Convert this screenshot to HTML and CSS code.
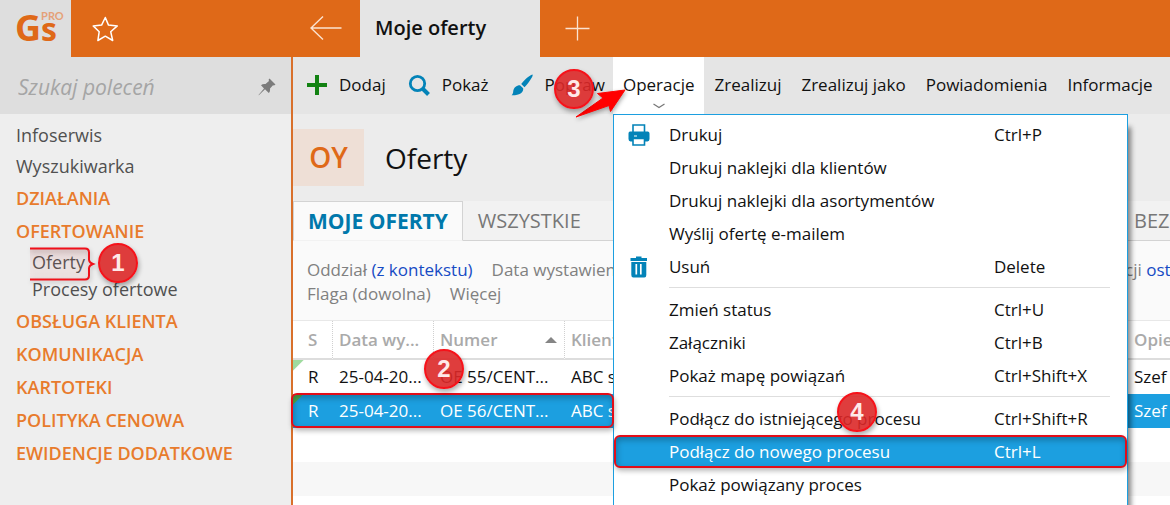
FILE: index.html
```html
<!DOCTYPE html>
<html lang="pl">
<head>
<meta charset="utf-8">
<title>Moje oferty</title>
<link rel="stylesheet" href="styles.css">
</head>
<body>
<div class="app">
  <header class="topbar">
    <div class="brand"><span class="brand-g">G</span><span class="brand-rest"><span class="brand-pro">PRO</span><span class="brand-s">s</span></span></div>
    <div class="topbar-left">
      <button class="icon-btn" aria-label="Ulubione"><svg width="28" height="28" viewBox="0 0 28 28" fill="none" stroke="#fff" stroke-width="1.5" stroke-linejoin="round"><path d="M14.300 2.500l3.200 7.600 8.800.8-6.600 5.800 2 8.800-7.400-4.300-7.400 4.300 1.300-8.800-6-5.800 8.400-.8z"/></svg></button>
    </div>
    <button class="icon-btn back" aria-label="Wstecz"><svg width="32" height="26" viewBox="0 0 32 26" fill="none" stroke="#fbe3d1" stroke-width="1.400"><path d="M31.500 12H1M13 .5L1 12l12 11.500"/></svg></button>
    <div class="doc-tab">Moje oferty</div>
    <button class="icon-btn add" aria-label="Nowa karta"><svg width="26" height="26" viewBox="0 0 26 26" fill="none" stroke="#fbe3d1" stroke-width="1.300"><path d="M.5 12.500h24M12.500.5v24"/></svg></button>
  </header>

  <aside class="sidebar">
    <div class="search">
      <input class="search-input" type="text" placeholder="Szukaj poleceń" aria-label="Szukaj poleceń">
      <button class="icon-btn" aria-label="Przypnij"><svg width="18" height="18" viewBox="0 0 18 18" fill="#7b7b7b"><path d="M11.500.5l6 6-1.500 1-1-.3-3 3.300c.3 2-.2 3.500-1.200 4.500L7 11.300.8 17.300l-.3-.3L6 10.500 3 7.200c1.200-1 2.700-1.400 4.500-1.100L11 3l-.4-1.200z"/></svg></button>
    </div>
    <nav class="nav">
      <a class="nav-item" href="#">Infoserwis</a>
      <a class="nav-item" href="#">Wyszukiwarka</a>
      <a class="nav-group" href="#">DZIAŁANIA</a>
      <a class="nav-group" href="#">OFERTOWANIE</a>
      <div class="nav-sub">
        <a class="nav-sub-item marked" href="#">Oferty
          <svg class="bracket" width="66" height="34" viewBox="0 0 66 34"><defs><linearGradient id="bf" x1="0" y1="0" x2="0" y2="1"><stop offset="0" stop-color="#900" stop-opacity=".12"/><stop offset=".5" stop-color="#f88" stop-opacity=".08"/><stop offset="1" stop-color="#f88" stop-opacity=".1"/></linearGradient></defs><path d="M0 1.500h55q4 0 4 4v7q0 3 4 4.500-4 1.500-4 4.500v7q0 4-4 4H0" fill="url(#bf)"/><path d="M0 1.500h55q4 0 4 4v7q0 3 4 4.500-4 1.500-4 4.500v7q0 4-4 4H0" fill="none" stroke="#f0101a" stroke-width="2"/></svg>
          <span class="badge badge-1">1</span></a>
        <a class="nav-sub-item" href="#">Procesy ofertowe</a>
      </div>
      <a class="nav-group" href="#">OBSŁUGA KLIENTA</a>
      <a class="nav-group" href="#">KOMUNIKACJA</a>
      <a class="nav-group" href="#">KARTOTEKI</a>
      <a class="nav-group" href="#">POLITYKA CENOWA</a>
      <a class="nav-group" href="#">EWIDENCJE DODATKOWE</a>
    </nav>
  </aside>

  <main class="main">
    <div class="toolbar">
      <button class="tool tool-icon"><svg width="20" height="20" viewBox="0 0 20 20"><path d="M8 0h4v8h8v4h-8v8H8v-8H0V8h8z" fill="#128212"/></svg>Dodaj</button>
      <button class="tool tool-icon"><svg width="22" height="22" viewBox="0 0 22 22" fill="none" stroke="#0383b8"><circle cx="9.500" cy="9.500" r="7.200" stroke-width="2.800"/><path d="M15 15l5.500 5.500" stroke-width="4"/></svg>Pokaż</button>
      <button class="tool tool-icon"><svg width="22" height="22" viewBox="0 0 22 22" fill="#0383b8"><path d="M21.500.5c.5.400 0 2-1 3.500-2 3.500-4.500 7-7 9.300l-3.300-3.200C12.800 6.500 18 1.500 21.500.5zM9 11.200l3.200 3.100c.5 5-4.500 7.300-11.700 7 .8-.6 1.700-2 1.700-3.800.3-4 3.300-6.300 6.800-6.300z"/></svg>Popraw</button>
      <div class="tool-open">
        <button class="tool tool-active" aria-expanded="true">Operacje<svg class="chevron" width="12" height="6" viewBox="0 0 12 6" fill="none" stroke="#777" stroke-width="1.200"><path d="M.5 1L6 4.500 11.500 1"/></svg></button>
        <svg class="arrow" width="52" height="34" viewBox="0 0 52 34"><path d="M1 29L28 10 22.500 5.500 50 2 35.500 23.500 34 17.500 1 29z" fill="#f00" stroke="#f00" stroke-linejoin="round"/></svg>
        <span class="badge badge-3">3</span>
        <div class="menu" role="menu">
          <button class="menu-item" role="menuitem"><svg width="22" height="22" viewBox="0 0 22 22"><path d="M5 8V1h11.500v7" fill="#fff" stroke="#0383b8" stroke-width="1.600"/><path d="M2 7.500h18a2 2 0 0 1 1.500 2V15q0 2-2 2.500H2.500Q.5 17 .5 15V9.500q0-2 1.500-2z" fill="#0383b8"/><path d="M5 14.500h11.500V21H5z" fill="#fff" stroke="#0383b8" stroke-width="1.600"/><path d="M6 11.500h3v1H6z" fill="#fff"/></svg><span>Drukuj</span><kbd>Ctrl+P</kbd></button>
          <button class="menu-item" role="menuitem"><span>Drukuj naklejki dla klientów</span></button>
          <button class="menu-item" role="menuitem"><span>Drukuj naklejki dla asortymentów</span></button>
          <button class="menu-item" role="menuitem"><span>Wyślij ofertę e-mailem</span></button>
          <button class="menu-item" role="menuitem"><svg width="22" height="22" viewBox="0 0 22 22"><path d="M2.500 2H8V.5h5.500V2H19v3H2.500z" fill="#0383b8"/><path d="M3.300 6h15v13q0 2.500-2 2.500h-11q-2 0-2-2.500z" fill="#0383b8"/><path d="M8.300 8v10.500M12.800 8v10.500" stroke="#fff" stroke-width="1.700"/></svg><span>Usuń</span><kbd>Delete</kbd></button>
          <hr class="menu-sep">
          <button class="menu-item" role="menuitem"><span>Zmień status</span><kbd>Ctrl+U</kbd></button>
          <button class="menu-item" role="menuitem"><span>Załączniki</span><kbd>Ctrl+B</kbd></button>
          <button class="menu-item" role="menuitem"><span>Pokaż mapę powiązań</span><kbd>Ctrl+Shift+X</kbd></button>
          <hr class="menu-sep">
          <button class="menu-item" role="menuitem"><span>Podłącz do istniejącego procesu</span><kbd>Ctrl+Shift+R</kbd></button>
          <button class="menu-item selected" role="menuitem"><span>Podłącz do nowego procesu</span><kbd>Ctrl+L</kbd><span class="badge badge-4">4</span></button>
          <button class="menu-item" role="menuitem"><span>Pokaż powiązany proces</span></button>
        </div>
      </div>
      <button class="tool">Zrealizuj</button>
      <button class="tool">Zrealizuj jako</button>
      <button class="tool">Powiadomienia</button>
      <button class="tool">Informacje</button>
    </div>

    <div class="heading">
      <div class="heading-code">OY</div>
      <h1 class="heading-title">Oferty</h1>
    </div>

    <div class="tabs" role="tablist">
      <button class="tab tab-current" role="tab" aria-selected="true">MOJE OFERTY</button>
      <button class="tab" role="tab">WSZYSTKIE</button>
      <button class="tab tab-last" role="tab">BEZ</button>
    </div>

    <div class="filters">
      <div class="filter-row">
        <span>Oddział <a class="filter-link" href="#">(z kontekstu)</a></span>
        <span>Data wystawienia</span>
        <span class="filter-last">cji <a class="filter-link" href="#">ost</a></span>
      </div>
      <div class="filter-row">
        <span>Flaga (dowolna)</span>
        <span>Więcej</span>
      </div>
    </div>

    <div class="grid-wrap">
      <table class="grid">
        <colgroup><col class="c-s"><col class="c-date"><col class="c-num"><col><col class="c-owner"></colgroup>
        <thead><tr><th>S</th><th>Data wy...</th><th class="sorted"><span class="sort-cell">Numer<svg width="12" height="6" viewBox="0 0 12 6"><path d="M0 6l6-6 6 6z" fill="#858585"/></svg></span></th><th>Klient</th><th>Opie</th></tr></thead>
        <tbody>
          <tr><td class="flagged">R</td><td>25-04-20...</td><td>OE 55/CENT...</td><td>ABC s</td><td>Szef</td></tr>
          <tr class="row-selected"><td class="flagged">R<span class="row-frame"></span><span class="badge badge-2">2</span></td><td>25-04-20...</td><td>OE 56/CENT...</td><td>ABC s</td><td>Szef</td></tr>
          <tr><td></td><td></td><td></td><td></td><td></td></tr>
          <tr class="row-alt"><td></td><td></td><td></td><td></td><td></td></tr>
        </tbody>
      </table>
    </div>
  </main>
</div>
</body>
</html>
```
FILE: styles.css
```css
* { box-sizing: border-box; }

body {
  margin: 0;
  overflow: hidden;
  font: 17px/24px "Open Sans", "Noto Sans", sans-serif;
  color: #111;
}

button {
  padding: 0;
  border: 0;
  background: none;
  color: inherit;
  font: inherit;
  text-align: left;
  white-space: nowrap;
}

a { text-decoration: none; }

svg { flex: none; display: block; }

.app {
  display: grid;
  grid-template-columns: 293px minmax(0, 1fr);
  grid-template-rows: 57px minmax(0, 1fr);
  height: 100vh;
}

/* top bar */
.topbar {
  grid-column: 1 / -1;
  display: flex;
  background: #df6918;
}

.brand {
  display: flex;
  align-items: flex-start;
  width: 71px;
  padding: 10px 0 0 15px;
  background: #dedede;
  color: #df6918;
  font-family: "Liberation Sans Narrow", "Open Sans", sans-serif;
}
.brand-g { font-size: 36px; line-height: 36px; font-weight: 700; }
.brand-rest { display: flex; flex-direction: column; padding-top: 1px; }
.brand-pro { font: 700 11px/10px Lato, sans-serif; color: #e5a178; }
.brand-s { font-size: 32px; line-height: 16px; font-weight: 700; }

.icon-btn { display: flex; align-items: center; }
.topbar-left { display: flex; width: 222px; padding-left: 20px; }
.back { width: 67px; padding-left: 17px; }
.doc-tab {
  width: 180px;
  padding: 0 15px;
  background: #e5e5e5;
  font-size: 20px;
  font-weight: 600;
  line-height: 56px;
  white-space: nowrap;
}
.add { padding-left: 25px; }

/* sidebar */
.sidebar { background: #eee; border-right: 2px solid #d9702b; }
.search {
  display: flex;
  align-items: center;
  justify-content: space-between;
  height: 57px;
  padding: 2px 15px 0 18px;
  background: #dedede;
}
.search-input {
  flex: 1;
  min-width: 0;
  padding: 0;
  border: 0;
  background: none;
  font: italic 21px/28px "Open Sans", sans-serif;
}
.search-input::placeholder { color: #a5a5a5; opacity: 1; }

.nav { display: flex; flex-direction: column; padding: 6px 16px; }
.nav-item { color: #505050; line-height: 31px; font-size: 18px; }
.nav-group { color: #e87b2c; line-height: 33px; font-size: 18px; font-weight: 600; }
.nav-sub { display: flex; flex-direction: column; padding: 1px 0 2px 16px; }
.nav-sub-item { color: #505050; line-height: 27px; font-size: 18px; }
.marked { position: relative; align-self: flex-start; }
.bracket { position: absolute; left: -2px; top: -2px; filter: drop-shadow(1px 2px 2px #0003); }

/* numbered callouts */
.badge {
  position: absolute;
  z-index: 5;
  width: 40px;
  height: 40px;
  border: 2px solid #f6121a;
  border-radius: 50%;
  background: #dc2828e6;
  box-shadow: 1px 3px 5px #0005;
  color: #ffe9e9;
  font: 700 24px/36px "Liberation Sans", sans-serif;
  text-align: center;
}
.badge-1 { left: 66px; top: -6px; }
.badge-2 { left: 131px; top: -45px; }
.badge-3 { left: -59px; top: 12px; }
.badge-4 { left: 221px; top: -45px; }

/* toolbar */
.main { display: flex; flex-direction: column; min-width: 0; background: #ececec; }
.toolbar { display: flex; height: 57px; background: #e5e5e5; }
.tool { display: flex; align-items: center; padding: 0 10px 2px; }
.tool-icon { gap: 12px; padding: 0 8px 2px 14px; }
.tool-open { position: relative; display: flex; }
.tool-active { background: #fff; }
.chevron { position: absolute; left: 40px; bottom: 5px; }
.arrow { position: absolute; z-index: 4; left: -38px; top: 31px; filter: drop-shadow(1px 2px 2px #0005); }

.menu {
  position: absolute;
  z-index: 3;
  left: 0;
  top: 57px;
  width: 515px;
  padding: 3px 0 12px;
  border: 1px solid #1c9fe0;
  background: #fff;
  box-shadow: 5px 11px 5px -2px #0007;
}
.menu-item {
  position: relative;
  display: grid;
  grid-template-columns: 41px 325px 1fr;
  align-items: center;
  width: 100%;
  height: 33px;
  padding-left: 14px;
}
.menu-item > span:not(.badge) { grid-column: 2; }
.menu-item kbd { grid-column: 3; font: inherit; }
.menu-sep { margin: 4px 17px 5px 55px; border: 0; border-top: 1px solid #dedede; }
.selected,
.row-frame {
  border: 2px solid #e30d18;
  border-radius: 6px;
  box-shadow: 1px 3px 5px #0004, inset 1px 3px 6px #0004;
}
.selected {
  padding-left: 12px;
  background: #1c9fe0;
  color: #fff;
}

/* heading */
.heading { display: flex; align-items: center; gap: 21px; padding: 15px 0; }
.heading-code {
  width: 71px;
  background: #eedfd6;
  color: #df6918;
  font-size: 28px;
  font-weight: 600;
  line-height: 57px;
  text-align: center;
}
.heading-title { margin: 0; font-size: 28px; font-weight: 400; line-height: 56px; }

/* tabs */
.tabs { display: flex; height: 40px; background: #f2f2f2; }
.tab {
  padding: 0 15px;
  border-bottom: 1px solid #d3d3d3;
  color: #777;
  font-size: 20px;
}
.tab:nth-child(2) { flex: 1; }
.tab-current {
  padding: 0 14px;
  border: 1px solid #d3d3d3;
  border-bottom-color: #f2f2f2;
  background: #fafafa;
  color: #0078ab;
  font-size: 21px;
  font-weight: 700;
}
.tab-last { width: 36px; padding: 0; }

/* filters */
.filters { padding: 17px 0 14px 14px; border-bottom: 1px solid #e8e8e8; background: #fafafa; color: #808080; }
.filter-row { display: flex; gap: 19px; white-space: nowrap; }
.filter-link { color: #164bc4; }
.filter-last { width: 45px; margin-left: auto; overflow: hidden; }

/* table */
.grid-wrap { flex: 1; background: #fff; }
.grid { width: 100%; table-layout: fixed; border-collapse: separate; border-spacing: 0; }
.c-s { width: 39px; }
.c-date { width: 101px; }
.c-num { width: 131px; }
.c-owner { width: 43px; }
.grid th {
  height: 39px;
  padding: 0 0 0 6px;
  border-bottom: 2px solid #ddd;
  border-left: 1px dotted #d0d0d0;
  color: #aaa;
  font-weight: 600;
  text-align: left;
  white-space: nowrap;
}
.grid td { height: 34px; padding: 0 0 0 6px; white-space: nowrap; border-left: 1px solid transparent; }
.grid th:first-child,
.grid td:first-child { padding-left: 15px; border-left: 0; }
.sort-cell { display: flex; align-items: center; justify-content: space-between; padding-right: 7px; }
.flagged { position: relative; background: linear-gradient(135deg, #9edb9e 7px, transparent 8px); }
.row-selected { background: #1c9fe0; color: #fff; }
.row-selected .flagged { background: linear-gradient(135deg, #4caf50 7px, transparent 8px); }
.row-frame { position: absolute; z-index: 4; left: -2px; top: -1px; width: 323px; height: 35px; }
.row-alt { background: #f7f7f7; }
```
